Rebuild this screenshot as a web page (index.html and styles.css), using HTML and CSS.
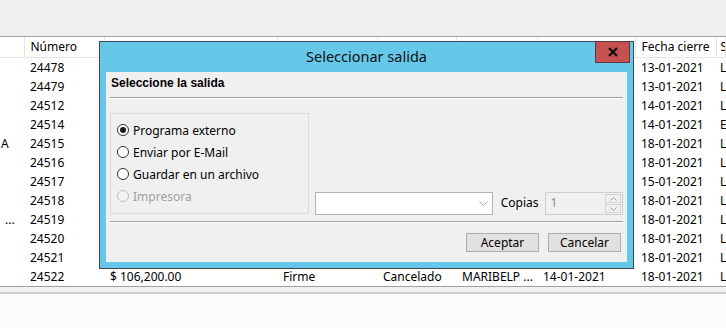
FILE: index.html
```html
<!DOCTYPE html>
<html>
<head>
    <meta charset="UTF-8">
    <title>Seleccionar salida</title>
    <link rel="stylesheet" href="styles.css">
</head>
<body>
    <div class="screen">
        <div class="toolbar"></div>

        <table class="grid">
            <colgroup>
                <col style="width: 24px">
                <col style="width: 80px">
                <col style="width: 173px">
                <col style="width: 100px">
                <col style="width: 79px">
                <col style="width: 81px">
                <col style="width: 98px">
                <col style="width: 81px">
                <col>
            </colgroup>
            <thead>
                <tr>
                    <th></th><th>Número</th><th></th><th></th><th></th><th></th><th></th><th>Fecha cierre</th><th class="last">S</th>
                </tr>
            </thead>
            <tbody>
                <tr><td></td><td>24478</td><td></td><td></td><td></td><td></td><td></td><td>13-01-2021</td><td class="last">L</td></tr>
                <tr><td></td><td>24479</td><td></td><td></td><td></td><td></td><td></td><td>13-01-2021</td><td class="last">L</td></tr>
                <tr><td></td><td>24512</td><td></td><td></td><td></td><td></td><td></td><td>14-01-2021</td><td class="last">L</td></tr>
                <tr><td></td><td>24514</td><td></td><td></td><td></td><td></td><td></td><td>14-01-2021</td><td class="last">E</td></tr>
                <tr><td>A</td><td>24515</td><td></td><td></td><td></td><td></td><td></td><td>18-01-2021</td><td class="last">L</td></tr>
                <tr><td></td><td>24516</td><td></td><td></td><td></td><td></td><td></td><td>18-01-2021</td><td class="last">L</td></tr>
                <tr><td></td><td>24517</td><td></td><td></td><td></td><td></td><td></td><td>15-01-2021</td><td class="last">L</td></tr>
                <tr><td></td><td>24518</td><td></td><td></td><td></td><td></td><td></td><td>18-01-2021</td><td class="last">L</td></tr>
                <tr><td class="dots">...</td><td>24519</td><td></td><td></td><td></td><td></td><td></td><td>18-01-2021</td><td class="last">L</td></tr>
                <tr><td></td><td>24520</td><td></td><td></td><td></td><td></td><td></td><td>18-01-2021</td><td class="last">L</td></tr>
                <tr><td></td><td>24521</td><td></td><td></td><td></td><td></td><td></td><td>18-01-2021</td><td class="last">L</td></tr>
                <tr><td></td><td>24522</td><td>$ 106,200.00</td><td>Firme</td><td>Cancelado</td><td>MARIBELP ...</td><td>14-01-2021</td><td>18-01-2021</td><td class="last">L</td></tr>
            </tbody>
        </table>

        <div class="scroll-strip"></div>
        <div class="footer"></div>

        <div class="dialog">
            <div class="dialog-title">Seleccionar salida</div>
            <div class="close-btn">
                <svg width="10" height="10" viewBox="0 0 10 10">
                    <path d="M1 1 L9 9 M9 1 L1 9" stroke="#111" stroke-width="2.4" fill="none"/>
                </svg>
            </div>
            <div class="dialog-body">
                <div class="section-title">Seleccione la salida</div>
                <div class="rule"></div>

                <div class="main-row">
                    <div class="group">
                        <div class="radio-row"><span class="radio checked"></span>Programa externo</div>
                        <div class="radio-row"><span class="radio"></span>Enviar por E-Mail</div>
                        <div class="radio-row"><span class="radio"></span>Guardar en un archivo</div>
                        <div class="radio-row disabled"><span class="radio"></span>Impresora</div>
                    </div>
                    <div class="combo">
                        <svg width="9" height="6" viewBox="0 0 9 6">
                            <path d="M0.5 0.5 L4.5 4.5 L8.5 0.5" stroke="#a8a8a8" stroke-width="1" fill="none"/>
                        </svg>
                    </div>
                    <span class="copies-label">Copias</span>
                    <div class="spin">
                        <span class="spin-value">1</span>
                        <div class="spin-buttons">
                            <div class="spin-btn">
                                <svg width="7" height="4" viewBox="0 0 7 4"><path d="M0.5 3.5 L3.5 0.5 L6.5 3.5" stroke="#a0a0a0" fill="none"/></svg>
                            </div>
                            <div class="spin-btn">
                                <svg width="7" height="4" viewBox="0 0 7 4"><path d="M0.5 0.5 L3.5 3.5 L6.5 0.5" stroke="#a0a0a0" fill="none"/></svg>
                            </div>
                        </div>
                    </div>
                </div>

                <div class="rule bottom"></div>

                <div class="buttons">
                    <button class="btn">Aceptar</button>
                    <button class="btn">Cancelar</button>
                </div>
            </div>
        </div>
    </div>
</body>
</html>
```

FILE: styles.css
```css
* {
    box-sizing: border-box;
}

body {
    margin: 0;
    font-family: "Noto Sans", sans-serif;
    font-size: 12px;
    color: #000;
    background: #fcfcfc;
}

.screen {
    position: relative;
    width: 726px;
    height: 328px;
    overflow: hidden;
}

.toolbar {
    height: 37px;
    background: #f0f0f0;
    border-bottom: 1px solid #a0a0a0;
}

.grid {
    width: 726px;
    table-layout: fixed;
    border-collapse: collapse;
    background: #fff;
    border-bottom: 1px solid #a0a0a0;
}

.grid th,
.grid td {
    height: 19px;
    padding: 0 0 0 6px;
    text-align: left;
    font-weight: normal;
    white-space: nowrap;
    overflow: hidden;
    line-height: 19px;
}

.grid th {
    height: 20px;
    border-right: 1px solid #e5e5e5;
    border-bottom: 1px solid #e5e5e5;
    background: #fff;
}

.grid td:first-child {
    padding-left: 1px;
}

.grid td.dots {
    padding-left: 5px;
}

.grid .last {
    padding-left: 4px;
}

.scroll-strip {
    height: 7px;
    background: #f0f0f0;
    border-bottom: 2px solid #c9ccd2;
}

.footer {
    height: 40px;
    background: #fcfcfc;
}

/* dialog over the grid */
.dialog {
    position: absolute;
    left: 99px;
    top: 41px;
    width: 535px;
    height: 228px;
    background: #65c8e8;
    border: 1px solid #3d4650;
    padding: 0 6px 6px 6px;
    display: flex;
    flex-direction: column;
}

.dialog-title {
    height: 30px;
    line-height: 29px;
    text-align: center;
    font-size: 14.5px;
    color: #111;
}

.close-btn {
    position: absolute;
    top: -1px;
    right: 3px;
    width: 35px;
    height: 22px;
    background: #c75050;
    border: 1px solid #5a3a3a;
    display: flex;
    align-items: center;
    justify-content: center;
}

.dialog-body {
    flex: 1;
    background: #f0f0f0;
    padding: 4px 4px 0 4px;
    display: flex;
    flex-direction: column;
}

.section-title {
    font-family: "Liberation Sans", Arial, sans-serif;
    font-weight: bold;
    font-size: 12px;
    padding-left: 1px;
    height: 14px;
    line-height: 14px;
}

.rule {
    margin-top: 7px;
    border-top: 1px solid #a0a0a0;
    border-bottom: 1px solid #fff;
}

.main-row {
    display: flex;
    align-items: flex-end;
    margin-top: 14px;
}

.group {
    width: 200px;
    height: 101px;
    border: 1px solid #dcdcdc;
    padding: 5px 0 0 6px;
}

.radio-row {
    display: flex;
    align-items: center;
    height: 22px;
    gap: 4px;
}

.radio {
    width: 12px;
    height: 12px;
    border-radius: 50%;
    border: 1px solid #333;
    background: #fff;
    display: flex;
    align-items: center;
    justify-content: center;
}

.radio.checked::after {
    content: "";
    width: 6px;
    height: 6px;
    border-radius: 50%;
    background: #1a1a1a;
}

.radio-row.disabled {
    color: #a0a0a0;
}

.radio-row.disabled .radio {
    border-color: #bcbcbc;
    background: #f4f4f4;
}

.combo {
    width: 179px;
    height: 23px;
    margin-left: 6px;
    margin-bottom: -1px;
    background: #fff;
    border: 1px solid #b4b4b4;
    display: flex;
    align-items: center;
    justify-content: flex-end;
    padding-right: 4px;
}

.copies-label {
    margin-left: 8px;
    line-height: 22px;
}

.spin {
    width: 79px;
    height: 23px;
    margin-left: 6px;
    margin-bottom: -1px;
    border: 1px solid #cfcfcf;
    background: #f0f0f0;
    display: flex;
    justify-content: space-between;
}

.spin-value {
    color: #8d8d8d;
    padding-left: 5px;
    line-height: 20px;
}

.spin-buttons {
    display: flex;
    flex-direction: column;
    width: 17px;
    padding: 1px 1px 1px 0;
    gap: 1px;
}

.spin-btn {
    flex: 1;
    border: 1px solid #d4d4d4;
    background: #f0f0f0;
    display: flex;
    align-items: center;
    justify-content: center;
}

.rule.bottom {
    margin-top: 7px;
}

.buttons {
    display: flex;
    justify-content: flex-end;
    gap: 9px;
    margin-top: 10px;
    padding-right: 2px;
}

.btn {
    width: 73px;
    height: 19px;
    padding: 0;
    font-family: "Noto Sans", sans-serif;
    font-size: 12px;
    line-height: 16px;
    color: #000;
    background: #e1e1e1;
    border: 1px solid #adadad;
}
```
